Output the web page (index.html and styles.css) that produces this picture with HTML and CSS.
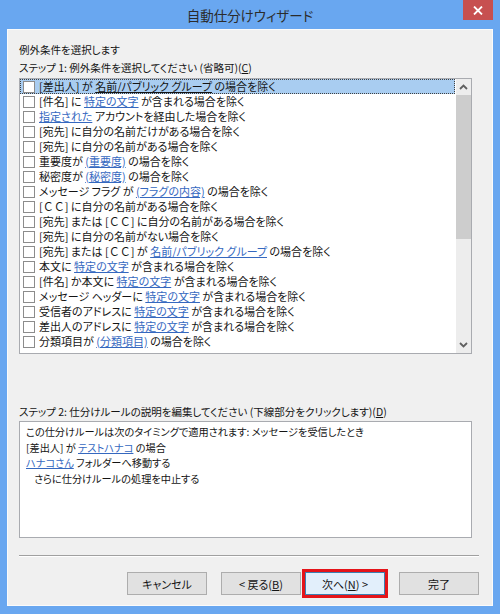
FILE: index.html
```html
<!DOCTYPE html>
<html lang="ja">
<head>
<meta charset="utf-8">
<title>自動仕分けウィザード</title>
<link rel="stylesheet" href="styles.css">
</head>
<body>
<div class="window">
  <div class="titlebar">
    <span class="spacer"></span>
    <span class="title">自動仕分けウィザード</span>
    <span class="controls">
      <span class="close"><svg width="10" height="9" viewBox="0 0 10 9"><path d="M1 0.5 L9 8.5 M9 0.5 L1 8.5" stroke="#fff" stroke-width="1.8" fill="none"/></svg></span>
    </span>
  </div>
  <div class="content">
    <div class="label first">例外条件を選択します</div>
    <div class="label step1">ステップ 1: 例外条件を選択してください (省略可)(<u>C</u>)</div>
    <div class="listbox">
      <ul class="rows">
        <li class="row selected"><span class="cb"></span><span class="txt">[差出人] が <a>名前/パブリック グループ</a> の場合を除く</span></li>
        <li class="row"><span class="cb"></span><span class="txt">[件名] に <a>特定の文字</a> が含まれる場合を除く</span></li>
        <li class="row"><span class="cb"></span><span class="txt"><a>指定された</a> アカウントを経由した場合を除く</span></li>
        <li class="row"><span class="cb"></span><span class="txt">[宛先] に自分の名前だけがある場合を除く</span></li>
        <li class="row"><span class="cb"></span><span class="txt">[宛先] に自分の名前がある場合を除く</span></li>
        <li class="row"><span class="cb"></span><span class="txt">重要度が <a>(重要度)</a> の場合を除く</span></li>
        <li class="row"><span class="cb"></span><span class="txt">秘密度が <a>(秘密度)</a> の場合を除く</span></li>
        <li class="row"><span class="cb"></span><span class="txt">メッセージ フラグ が <a>(フラグの内容)</a> の場合を除く</span></li>
        <li class="row"><span class="cb"></span><span class="txt">[<span class="fw">ＣＣ</span>] に自分の名前がある場合を除く</span></li>
        <li class="row"><span class="cb"></span><span class="txt">[宛先] または [<span class="fw">ＣＣ</span>] に自分の名前がある場合を除く</span></li>
        <li class="row"><span class="cb"></span><span class="txt">[宛先] に自分の名前がない場合を除く</span></li>
        <li class="row"><span class="cb"></span><span class="txt">[宛先] または [<span class="fw">ＣＣ</span>] が <a>名前/パブリック グループ</a> の場合を除く</span></li>
        <li class="row"><span class="cb"></span><span class="txt">本文に <a>特定の文字</a> が含まれる場合を除く</span></li>
        <li class="row"><span class="cb"></span><span class="txt">[件名] か本文に <a>特定の文字</a> が含まれる場合を除く</span></li>
        <li class="row"><span class="cb"></span><span class="txt">メッセージ ヘッダーに <a>特定の文字</a> が含まれる場合を除く</span></li>
        <li class="row"><span class="cb"></span><span class="txt">受信者のアドレスに <a>特定の文字</a> が含まれる場合を除く</span></li>
        <li class="row"><span class="cb"></span><span class="txt">差出人のアドレスに <a>特定の文字</a> が含まれる場合を除く</span></li>
        <li class="row"><span class="cb"></span><span class="txt">分類項目が <a>(分類項目)</a> の場合を除く</span></li>
      </ul>
      <div class="scrollbar">
        <div class="sb-btn"><svg width="9" height="6" viewBox="0 0 9 6"><path d="M1 5 L4.5 1.5 L8 5" stroke="#606060" stroke-width="1.8" fill="none"/></svg></div>
        <div class="sb-track"><div class="sb-thumb"></div></div>
        <div class="sb-btn"><svg width="9" height="6" viewBox="0 0 9 6"><path d="M1 1 L4.5 4.5 L8 1" stroke="#606060" stroke-width="1.8" fill="none"/></svg></div>
      </div>
    </div>
    <div class="label step2">ステップ 2: 仕分けルールの説明を編集してください (下線部分をクリックします)(<u>D</u>)</div>
    <div class="desc">
      <div class="line">この仕分けルールは次のタイミングで適用されます: メッセージを受信したとき</div>
      <div class="line">[差出人] が <a>テストハナコ</a> の場合</div>
      <div class="line"><a>ハナコさん</a> フォルダーへ移動する</div>
      <div class="line indent">さらに仕分けルールの処理を中止する</div>
    </div>
    <div class="separator"></div>
    <div class="buttons">
      <button class="btn">キャンセル</button>
      <button class="btn back">&lt; 戻る(<u>B</u>)</button>
      <button class="btn default">次へ(<u>N</u>) &gt;</button>
      <button class="btn finish">完了</button>
    </div>
  </div>
</div>
</body>
</html>
```
FILE: styles.css
```css
* { box-sizing: border-box; }
html, body { margin: 0; padding: 0; }
body {
  font-family: "Noto Sans CJK JP", "Noto Sans", sans-serif;
  font-feature-settings: "palt";
  font-size: 10.5px;
  color: #141414;
  background: #69a7f0;
}
.window {
  width: 500px;
  height: 614px;
  background: #69a7f0;
  display: flex;
  flex-direction: column;
}
.titlebar {
  height: 29px;
  display: grid;
  grid-template-columns: 1fr auto 1fr;
}
.title {
  align-self: center;
  font-size: 13.5px;
  line-height: 18px;
  color: #2b2b2b;
  padding-top: 1px;
}
.controls {
  display: flex;
  justify-content: flex-end;
  align-items: flex-start;
  padding-right: 7px;
}
.close {
  width: 30px;
  height: 20px;
  background: #c75050;
  display: flex;
  align-items: center;
  justify-content: center;
}
.content {
  flex: 1;
  margin: 0 7px 8px 7px;
  background: #f0f0f0;
  border: 1px solid #fbfbfb;
  padding: 12px 13px 0 11px;
  display: flex;
  flex-direction: column;
}
.label {
  line-height: 16px;
  height: 16px;
  white-space: nowrap;
}
.step1 { margin-top: 2px; }
.step2 { margin-top: 50px; }
.listbox {
  margin-top: 2px;
  width: 453px;
  height: 276px;
  border: 1px solid #a9abb0;
  background: #fff;
  display: flex;
}
.rows {
  list-style: none;
  margin: 0;
  padding: 0;
  flex: 1;
  font-size: 11px;
}
.row {
  height: 15px;
  display: flex;
  align-items: center;
  padding-left: 3px;
  margin-right: 1px;
  white-space: nowrap;
}
.row.selected {
  background: #a9cdf1;
  outline: 1px dotted #404040;
  outline-offset: -1px;
}
.cb {
  width: 12px;
  height: 12px;
  border: 1px solid #8c8c8c;
  background: #fff;
  margin-right: 4px;
  flex: none;
}
.txt { line-height: 15px; }
.fw { font-feature-settings: normal; }
a {
  color: #3568bf;
  text-decoration: underline;
  text-underline-offset: 1px;
}
.row.selected a { color: #141414; }
.scrollbar {
  width: 15px;
  background: #ededed;
  display: flex;
  flex-direction: column;
}
.sb-btn {
  height: 16px;
  display: flex;
  align-items: center;
  justify-content: center;
}
.sb-track {
  flex: 1;
}
.sb-thumb {
  height: 144px;
  background: #cdcdcd;
}
.desc {
  margin-top: 1px;
  width: 453px;
  height: 117px;
  border: 1px solid #a9abb0;
  background: #fff;
  padding: 2px 0 0 6px;
  font-size: 10.2px;
}
.line {
  line-height: 15.5px;
  white-space: nowrap;
}
.indent { padding-left: 8px; }
.separator {
  margin-top: 17px;
  width: 460px;
  height: 2px;
  border-top: 1px solid #a0a0a0;
  border-bottom: 1px solid #ffffff;
}
.buttons {
  margin-top: 15px;
  display: flex;
  justify-content: flex-end;
  gap: 14px;
}
.btn {
  width: 80px;
  height: 23px;
  font: inherit;
  font-size: 11px;
  color: #141414;
  background: #e1e1e1;
  border: 1px solid #adadad;
  padding: 0;
  line-height: 20px;
}
.btn.back { margin-right: -10px; }
.btn.default {
  background: #e2effb;
  border: 1px solid #3c7fb1;
  outline: 3px solid #e4141a;
  outline-offset: 0;
}
```
